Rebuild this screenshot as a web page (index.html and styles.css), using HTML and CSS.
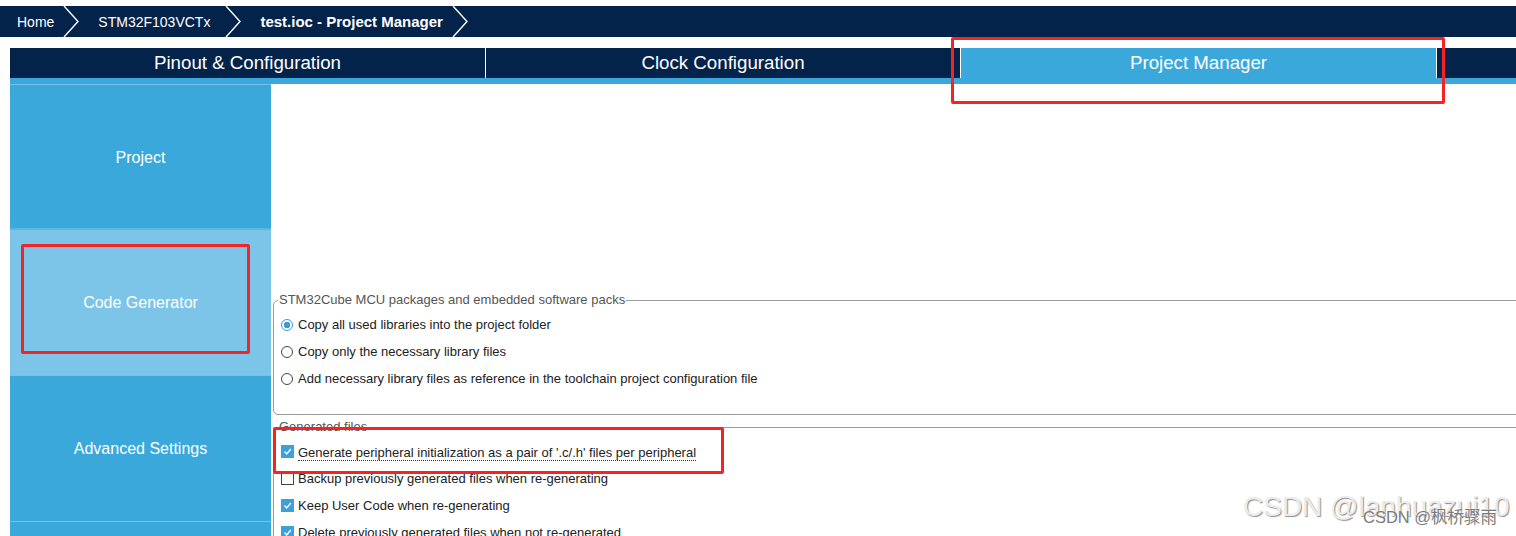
FILE: index.html
```html
<!DOCTYPE html>
<html lang="en">

<head>
    <meta charset="UTF-8">
    <meta name="viewport" content="width=device-width, initial-scale=1.0">
    <title>test.ioc - Project Manager</title>
    <link rel="stylesheet" href="styles.css">
</head>

<body>
    <div class="page">

        <!-- breadcrumb bar -->
        <nav class="crumbs">
            <span class="crumb home">Home</span>
            <svg class="chev" viewBox="0 0 16 31"><polyline points="1,0 15,15.5 1,31" /></svg>
            <span class="crumb">STM32F103VCTx</span>
            <svg class="chev" viewBox="0 0 16 31"><polyline points="1,0 15,15.5 1,31" /></svg>
            <span class="crumb current">test.ioc - Project Manager</span>
            <svg class="chev" viewBox="0 0 16 31"><polyline points="1,0 15,15.5 1,31" /></svg>
        </nav>

        <!-- main tabs -->
        <div class="tabs">
            <div class="tab">Pinout &amp; Configuration</div>
            <div class="tab tab-mid">Clock Configuration</div>
            <div class="tab active">Project Manager</div>
        </div>

        <div class="main">
            <aside class="side">
                <div class="side-item">Project</div>
                <div class="side-item selected">Code Generator</div>
                <div class="side-item">Advanced Settings</div>
                <div class="side-item"></div>
            </aside>

            <section class="content">
                <fieldset class="group group-packs">
                    <legend>STM32Cube MCU packages and embedded software packs</legend>
                    <label class="opt"><span class="radio on"></span>Copy all used libraries into the project folder</label>
                    <label class="opt"><span class="radio"></span>Copy only the necessary library files</label>
                    <label class="opt"><span class="radio"></span>Add necessary library files as reference in the toolchain project configuration file</label>
                </fieldset>

                <fieldset class="group group-files">
                    <legend>Generated files</legend>
                    <label class="opt">
                        <span class="check on"><svg viewBox="0 0 13 13"><polyline points="3,6.5 5.5,9.5 10.5,3.5" /></svg></span>
                        <span class="focused">Generate peripheral initialization as a pair of '.c/.h' files per peripheral</span>
                    </label>
                    <label class="opt"><span class="check"></span>Backup previously generated files when re-generating</label>
                    <label class="opt">
                        <span class="check on"><svg viewBox="0 0 13 13"><polyline points="3,6.5 5.5,9.5 10.5,3.5" /></svg></span>
                        Keep User Code when re-generating
                    </label>
                    <label class="opt">
                        <span class="check on"><svg viewBox="0 0 13 13"><polyline points="3,6.5 5.5,9.5 10.5,3.5" /></svg></span>
                        Delete previously generated files when not re-generated
                    </label>
                </fieldset>
            </section>
        </div>

        <!-- red annotation boxes -->
        <div class="mark mark-tab"></div>
        <div class="mark mark-side"></div>
        <div class="mark mark-row"></div>

        <div class="watermark">CSDN @lanhuazui10</div>
        <div class="watermark-small">CSDN @枫桥骤雨</div>
    </div>
</body>

</html>
```

FILE: styles.css
```css
html,
body {
    margin: 0;
    height: 536px;
    overflow: hidden;
    background-color: #fff;
}

body {
    font-family: "Liberation Sans", Arial, sans-serif;
}

.page {
    position: relative;
    height: 536px;
    overflow: hidden;
}

/* breadcrumb */
.crumbs {
    display: flex;
    align-items: center;
    height: 31px;
    margin-top: 6px;
    background-color: #04234b;
    color: #fff;
    font-size: 14px;
}

.crumb {
    padding: 0 15px 0 19px;
}

.crumb.home {
    padding: 0 9px 0 17px;
}

.crumb.current {
    padding: 0 9px 0 19px;
    font-size: 15px;
    font-weight: bold;
}

.chev {
    width: 16px;
    height: 31px;
    flex-shrink: 0;
}

.chev polyline {
    fill: none;
    stroke: #fff;
    stroke-width: 1.4;
}

/* tabs */
.tabs {
    display: flex;
    height: 30px;
    margin: 11px 0 0 10px;
    background-color: #04234b;
    border-bottom: 6px solid #3aa8db;
}

.tab {
    width: 475px;
    border-right: 1px solid #fff;
    color: #fff;
    font-size: 18.7px;
    line-height: 30px;
    text-align: center;
}

.tab-mid {
    width: 474px;
}

.tab.active {
    background-color: #3aa8db;
}

/* sidebar + content */
.main {
    display: flex;
    margin-left: 10px;
    height: 452px;
}

.side {
    width: 261px;
    flex-shrink: 0;
    background-color: #3aa8db;
}

.side-item {
    box-sizing: border-box;
    height: 146px;
    border-top: 1px solid #72c2ea;
    display: flex;
    align-items: center;
    justify-content: center;
    color: #fff;
    font-size: 16px;
}

.side-item:first-child {
    height: 144px;
    padding-top: 2px;
}

.side-item.selected {
    height: 147px;
    background-color: #7dc5e8;
    border-top: 2px solid #5cb6e2;
}

.content {
    flex: 1;
    min-width: 0;
    padding-left: 2px;
}

.group {
    margin: 0 -20px 0 0;
    padding: 4px 0 22px 7px;
    border: 1px solid #9c9c9c;
    border-radius: 5px 0 0 5px;
    min-width: 0;
}

.group legend {
    margin-left: -3px;
    padding: 0 1px;
    font-size: 13px;
    line-height: 14px;
    color: #555;
}

.group-packs {
    margin-top: 209px;
}

.group-files {
    margin-top: 5px;
    padding-top: 4px;
}

.opt {
    display: flex;
    align-items: center;
    gap: 5px;
    height: 27px;
    font-size: 13px;
    color: #222;
}

.radio {
    box-sizing: border-box;
    width: 12px;
    height: 12px;
    border: 1px solid #444;
    border-radius: 50%;
    background-color: #fff;
}

.radio.on {
    border-color: #3c9bd8;
    background: radial-gradient(circle, #3c9bd8 0, #3c9bd8 3px, #fff 3.5px);
}

.check {
    box-sizing: border-box;
    width: 13px;
    height: 13px;
    margin-right: -1px;
    border: 1px solid #444;
    background-color: #fff;
}

.check.on {
    border-color: #3ca0da;
    background-color: #3ca0da;
}

.check svg {
    display: block;
    width: 11px;
    height: 11px;
}

.check polyline {
    fill: none;
    stroke: #fff;
    stroke-width: 1.6;
}

.focused {
    line-height: 15px;
    padding-top: 2px;
    border-bottom: 1px dotted #333;
}

/* annotations over the screenshot */
.mark {
    position: absolute;
    box-sizing: border-box;
    border: 3px solid #f42424;
    border-radius: 2px;
}

.mark-tab {
    left: 951px;
    top: 37px;
    width: 494px;
    height: 67px;
}

.mark-side {
    left: 21px;
    top: 244px;
    width: 229px;
    height: 110px;
}

.mark-row {
    left: 273px;
    top: 427px;
    width: 451px;
    height: 47px;
}

.watermark {
    position: absolute;
    left: 1243px;
    top: 493px;
    font-size: 28px;
    line-height: 28px;
    color: #ececec;
    text-shadow: 1px 1px 1px #8c8c8c;
    white-space: nowrap;
}

.watermark-small {
    position: absolute;
    left: 1363px;
    top: 508px;
    font-family: "Liberation Sans", "Noto Sans CJK SC", sans-serif;
    font-size: 16.5px;
    line-height: 19px;
    color: #7a7a7a;
    text-shadow: 0 0 2px #fff;
    white-space: nowrap;
}
```
